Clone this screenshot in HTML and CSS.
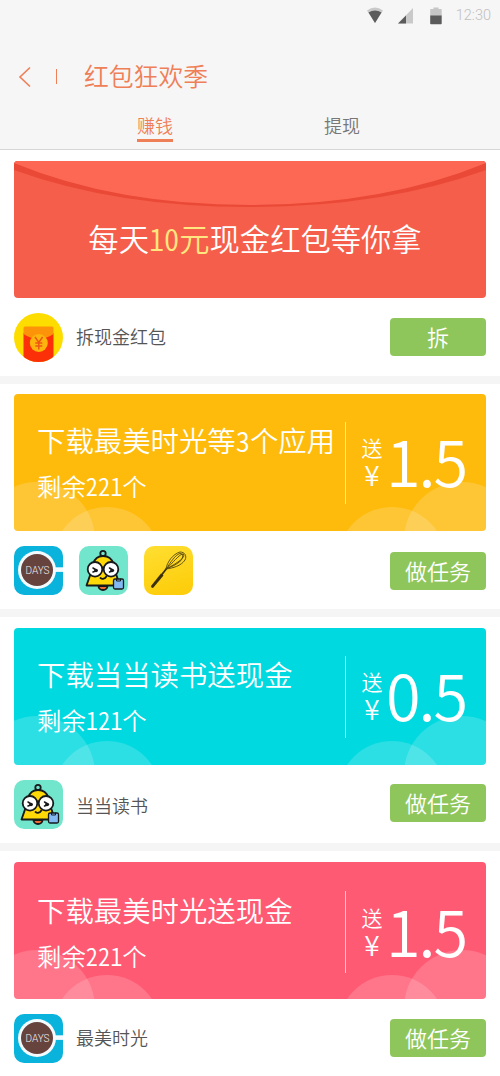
FILE: index.html
```html
<!DOCTYPE html>
<html lang="zh-CN">
<head>
<meta charset="utf-8">
<title>红包狂欢季</title>
<link rel="stylesheet" href="styles.css">
</head>
<body>
<svg class="defs" width="0" height="0" aria-hidden="true">
  <symbol id="bubbles" viewBox="0 0 472 137">
    <g fill="#fff" fill-opacity=".17">
      <circle cx="23" cy="146" r="58"/><circle cx="93" cy="167" r="54"/>
      <circle cx="378" cy="167" r="54"/><circle cx="448" cy="146" r="58"/>
    </g>
  </symbol>
  <symbol id="days" viewBox="0 0 49 49">
    <rect width="49" height="49" rx="10" fill="#09b3dc"/>
    <path d="M38 23.600h11" stroke="#f3fbff" stroke-width="4.600"/>
    <circle cx="23" cy="24" r="19" fill="#f3fbff"/>
    <circle cx="23" cy="24" r="16" fill="#67433e"/>
  </symbol>
  <symbol id="bell" viewBox="0 0 49 49">
    <rect width="49" height="49" rx="10" fill="#71e6cc"/>
    <g stroke="#17191b" stroke-width="1.800" stroke-linejoin="round" stroke-linecap="round">
      <circle cx="24" cy="7.500" r="2.700" fill="#71e6cc"/>
      <path d="M19.500 40a4.500 4 0 0 0 9 0z" fill="#f06a34"/>
      <path d="M24 10c-5.500 0-8.500 3-10 8-1 7-3.500 13-6.500 21.500h33.500c-3-8.500-5.500-14.500-6.500-21.500-1.500-5-5-8-10.500-8z" fill="#ffd808"/>
      <circle cx="16" cy="23.300" r="7.300" fill="#fff"/>
      <circle cx="32" cy="23.300" r="7.300" fill="#fff"/>
      <path d="M23.300 21.500h1.400M21.500 32c2 1.700 4.500.7 5.800-1.500" fill="none"/>
      <path d="M14 22l4 2.500-4 1.500M30.500 22l4 2.500-4 1.500" fill="none" stroke-width="1.500"/>
      <path d="M34.500 34.500q0-1.500 1.500-1.500h7q1.500 0 1.500 1.500v7q0 1.500-1.500 1.500h-7q-1.500 0-1.500-1.500z" fill="#83b9f2" stroke-width="1.300"/>
      <path d="M37.500 33v2h4v-2" fill="none" stroke-width="1"/>
    </g>
    <circle cx="17" cy="24.500" r="1.800" fill="#17191b"/><circle cx="33" cy="24.500" r="1.800" fill="#17191b"/>
  </symbol>
  <symbol id="whisk" viewBox="0 0 49 49">
    <linearGradient id="gold" x2=".3" y2="1"><stop stop-color="#ffdf32"/><stop offset="1" stop-color="#fdce0d"/></linearGradient>
    <rect width="49" height="49" rx="10" fill="url(#gold)"/>
    <path d="M7 40L17 27.500l2.500 2L9 42q-2 0-2-2z" fill="#3b300b"/>
    <path d="M17.500 29L23 22" stroke="#3b300b" stroke-width="1.800"/>
    <g fill="none" stroke="#544610" stroke-width=".9">
      <path d="M22 23C23 16 29 8 36 6c5 0 7 4 5 8-4 6-12 8-19 9z"/>
      <path d="M22 23C27 16 31 9 36 7.500c4 0 3 4 1 7-4 4-9 6-15 8.500z"/>
      <path d="M22 23C28 18 36 7 39.500 8c2 3-4 8-17.500 15z"/>
    </g>
  </symbol>
</svg>

<header class="header">
  <div class="status">
    <svg width="18" height="18" viewBox="0 0 18 18"><path d="M1 3.500Q9-2.500 17 3.500L9 16z" fill="#c9c9c9"/><path d="M2.500 5.500Q9 1.500 15.500 5.500L9 16z" fill="#5b5b5b"/></svg>
    <svg width="16" height="16" viewBox="0 0 16 16"><path d="M15 0v15.500H0z" fill="#c9c9c9"/><path d="M8 7.500v8H0z" fill="#5b5b5b"/></svg>
    <svg width="12" height="18" viewBox="0 0 12 18"><path d="M1 2h2.500V.5h5V2H11q.7 0 .7.700V9H.2V2.700Q.2 2 1 2z" fill="#c6c6c6"/><path d="M.2 8.500h11.500v8q0 .8-.8.800H1q-.8 0-.8-.8z" fill="#5b5b5b"/></svg>
    <span class="time">12:30</span>
  </div>
  <div class="titlebar">
    <svg width="14" height="22" viewBox="0 0 14 22"><path d="M12 1.500L2 11l10 9.500" fill="none" stroke="#ef7f56" stroke-width="1.600"/></svg>
    <i class="bar"></i>
    <h1>红包狂欢季</h1>
  </div>
  <nav class="tabs">
    <a class="tab active">赚钱</a>
    <a class="tab">提现</a>
  </nav>
</header>

<main>
  <section class="section">
    <div class="banner hero">
      <svg class="art" viewBox="0 0 472 137"><path d="M0 0H472V9Q370 46 236 46T0 9z" fill="#e94936"/><path d="M0 0H472V2Q370 44 236 44T0 2z" fill="#fc6854"/></svg>
      <p class="slogan">每天<em>10元</em>现金红包等你拿</p>
    </div>
    <div class="row">
      <svg class="icon" viewBox="0 0 49 49">
        <clipPath id="round"><circle cx="24.500" cy="24.500" r="24.500"/></clipPath>
        <g clip-path="url(#round)">
          <rect width="49" height="49" fill="#fddd00"/>
          <path d="M9.500 20H39.500V49H9.500z" fill="#fb3008"/>
          <path d="M9.500 15q0-1.500 1.500-1.500h27q1.500 0 1.500 1.500v6Q24.500 31 9.500 21z" fill="#fd9308"/>
          <circle cx="24.800" cy="30" r="9" fill="#fdb40c"/>
          <path d="M21 24l3.800 5.500 3.800-5.500M24.800 29.500v7M21.300 30h7M21.300 33h7" fill="none" stroke="#ee5714" stroke-width="1.500"/>
        </g>
      </svg>
      <span class="name">拆现金红包</span>
      <button class="btn">拆</button>
    </div>
  </section>

  <section class="section second">
    <div class="banner yellow">
      <svg class="art"><use href="#bubbles"/></svg>
      <div class="info"><h2>下载最美时光等<span class="half">3</span>个应用</h2><p>剩余221个</p></div>
      <div class="reward"><div class="unit"><span>送</span><span class="yen">¥</span></div><strong>1.5</strong></div>
    </div>
    <div class="row">
      <svg class="icon" viewBox="0 0 49 49"><use href="#days"/><text x="23.500" y="28" text-anchor="middle" class="days-text">DAYS</text></svg>
      <svg class="icon"><use href="#bell"/></svg>
      <svg class="icon"><use href="#whisk"/></svg>
      <button class="btn">做任务</button>
    </div>
  </section>

  <section class="section third">
    <div class="banner cyan">
      <svg class="art"><use href="#bubbles"/></svg>
      <div class="info"><h2>下载当当读书送现金</h2><p>剩余121个</p></div>
      <div class="reward"><div class="unit"><span>送</span><span class="yen">¥</span></div><strong>0.5</strong></div>
    </div>
    <div class="row">
      <svg class="icon"><use href="#bell"/></svg>
      <span class="name">当当读书</span>
      <button class="btn">做任务</button>
    </div>
  </section>

  <section class="section fourth">
    <div class="banner pink">
      <svg class="art"><use href="#bubbles"/></svg>
      <div class="info"><h2>下载最美时光送现金</h2><p>剩余221个</p></div>
      <div class="reward"><div class="unit"><span>送</span><span class="yen">¥</span></div><strong>1.5</strong></div>
    </div>
    <div class="row">
      <svg class="icon" viewBox="0 0 49 49"><use href="#days"/><text x="23.500" y="28" text-anchor="middle" class="days-text">DAYS</text></svg>
      <span class="name">最美时光</span>
      <button class="btn">做任务</button>
    </div>
  </section>
</main>
</body>
</html>
```

FILE: styles.css
```css
* { box-sizing: border-box; }
body {
  margin: 0;
  width: 500px;
  height: 1076px;
  overflow: hidden;
  background: #fff;
  color: #555;
  font-family: "Noto Sans CJK SC", sans-serif;
  font-weight: 350;
}
h1, h2, p { margin: 0; font-weight: inherit; }
svg { display: block; flex: none; }
.defs { position: absolute; }

.header {
  height: 150px;
  background: #f6f6f6;
  border-bottom: 1px solid #d6d6d6;
}
.status {
  height: 32px;
  padding-right: 9px;
  display: flex;
  justify-content: flex-end;
  align-items: center;
}
.status svg:nth-child(1) { margin-right: 14px; }
.status svg:nth-child(2) { margin-right: 16px; }
.status svg:nth-child(3) { margin-right: 14px; }
.time { font: 14.500px/32px Roboto, sans-serif; font-weight: 300; color: #c0c0c0; }
.titlebar {
  height: 72px;
  padding: 17px 0 0 18px;
  display: flex;
  align-items: center;
  color: #ef7f56;
}
.bar { width: 1px; height: 15px; margin: 0 27px 0 24px; background: #ef7f56; }
h1 { font-size: 24.800px; line-height: 36px; margin-top: -3px; }
.tabs { display: flex; padding: 10px 0 0 137px; gap: 151px; }
.tab { width: 36px; height: 28px; font-size: 18px; line-height: 23px; color: #777; white-space: nowrap; }
.tab.active { color: #ef7f56; border-bottom: 3px solid #ef7f56; }

.section { height: 234px; padding: 11px 14px 0; border-bottom: 8px solid #f5f5f5; }
.second { height: 233px; padding-top: 10px; }
.fourth { border: 0; }
.banner {
  height: 137px;
  border-radius: 4px;
  overflow: hidden;
  display: grid;
  grid-template-columns: 331px 141px;
  align-items: center;
  color: #fff;
}
.art { grid-area: 1 / 1 / 2 / 3; width: 472px; height: 137px; }
.hero { background: #f55e4a; }
.yellow { background: #febb0c; }
.cyan { background: #00d9df; }
.pink { background: #ff5a73; padding-top: 3px; }
.pink .art { margin-top: -3px; }
.slogan {
  grid-area: 1 / 1 / 2 / 3;
  font-size: 30.300px;
  line-height: 40px;
  text-align: center;
  padding: 17px 0 0 10px;
  font-feature-settings: "hwid";
}
.slogan em { font-style: normal; color: #ffe680; }
.info { grid-area: 1 / 1; padding: 0 0 0 23px; white-space: nowrap; }
.info h2 { font-size: 28.400px; line-height: 46px; }
.info p { font-size: 24.400px; line-height: 46px; }
.pink .info { padding-top: 2px; }
.info p, .half { font-feature-settings: "hwid"; }
.reward {
  grid-area: 1 / 2;
  height: 82px;
  border-left: 1px solid rgba(255,255,255,.65);
  padding-left: 15px;
  display: flex;
  align-items: center;
}
.unit { width: 22px; display: grid; justify-items: center; grid-template-rows: 26px 28px; font-size: 21px; line-height: 26px; padding-bottom: 3px; }
.yen { font-size: 28px; line-height: 28px; }
.reward strong { margin-left: 3px; font-size: 63px; line-height: 80px; font-weight: 350; letter-spacing: -2px; padding-bottom: 5px; }

.row { display: flex; align-items: center; padding-top: 15px; height: 64px; }
.icon { width: 49px; height: 49px; }
.icon + .icon { margin-left: 16px; }
.name { margin: -3px 0 0 13px; font-size: 18px; line-height: 26px; }
.third .name { margin-top: 0; }
.btn {
  width: 96px;
  height: 38px;
  margin: -2px 0 0 auto;
  padding: 0 0 1px;
  border: 0;
  border-radius: 4px;
  background: #8fc65b;
  color: #fff;
  font: inherit;
  font-size: 22px;
  line-height: 37px;
}
.second .btn { margin-top: 0; }
.third .btn { margin-top: -4px; }
.days-text { font: 10px Roboto, sans-serif; font-weight: 300; fill: #eee; }
```
